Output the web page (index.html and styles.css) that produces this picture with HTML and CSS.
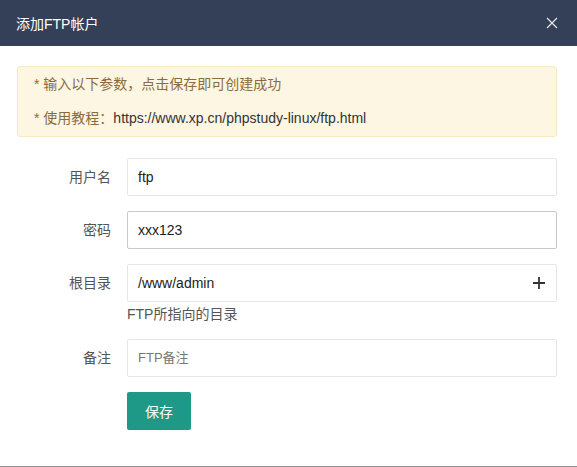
FILE: index.html
```html
<!DOCTYPE html>
<html lang="zh-CN">
<head>
<meta charset="utf-8">
<link rel="stylesheet" href="styles.css">
</head>
<body>
<div class="dialog">
  <div class="header">
    <span class="title">添加FTP帐户</span>
    <svg class="close" width="12" height="12" viewBox="0 0 12 12"><path d="M1 1L11 11M11 1L1 11" stroke="#e6e8ee" stroke-width="1.2" fill="none"/></svg>
  </div>
  <div class="content">
    <div class="alert">
      <p>* 输入以下参数，点击保存即可创建成功</p>
      <p>* 使用教程：<span class="link">https://www.xp.cn/phpstudy-linux/ftp.html</span></p>
    </div>
    <div class="form">
      <div class="row">
        <label class="label">用户名</label>
        <div class="field"><div class="input">ftp</div></div>
      </div>
      <div class="row">
        <label class="label">密码</label>
        <div class="field"><div class="input focus">xxx123</div></div>
      </div>
      <div class="row">
        <label class="label">根目录</label>
        <div class="field">
          <div class="input with-icon">/www/admin
            <svg class="plus" width="12" height="12" viewBox="0 0 12 12"><path d="M6 0V12M0 6H12" stroke="#333" stroke-width="1.8" fill="none"/></svg>
          </div>
          <div class="help">FTP所指向的目录</div>
        </div>
      </div>
      <div class="row">
        <label class="label">备注</label>
        <div class="field"><div class="input placeholder">FTP备注</div></div>
      </div>
      <div class="row">
        <div class="label"></div>
        <div class="field"><button class="btn">保存</button></div>
      </div>
    </div>
  </div>
</div>
</body>
</html>
```

FILE: styles.css
```css
html, body {
  margin: 0;
  padding: 0;
  background: #fff;
}
body {
  font-family: "Liberation Sans", "Noto Sans CJK SC", sans-serif;
  font-size: 14px;
  color: #333;
}
.dialog {
  width: 577px;
  height: 466px;
  border-bottom: 1px solid #8f8f8f;
  box-sizing: content-box;
}
.header {
  height: 46px;
  background: #344058;
  display: flex;
  align-items: center;
  justify-content: space-between;
  padding: 0 19px 0 16px;
}
.title {
  color: #fff;
  font-size: 14px;
}
.close {
  display: block;
}
.content {
  padding: 20px 20px 0 17px;
}
.alert {
  background: #fdf6e2;
  border: 1px solid #f7e9c3;
  border-radius: 3px;
  height: 69px;
  padding: 0 16px;
  display: flex;
  flex-direction: column;
  justify-content: center;
  gap: 15px;
  color: #8b6b3a;
  font-size: 14px;
}
.alert p {
  margin: 0;
  line-height: 19px;
}
.link {
  color: #333;
}
.form {
  margin-top: 21px;
  display: flex;
  flex-direction: column;
  gap: 15px;
}
.row {
  display: flex;
  align-items: flex-start;
}
.label {
  width: 94px;
  flex: none;
  text-align: right;
  line-height: 38px;
  color: #555;
  padding-right: 16px;
}
.field {
  flex: 1;
}
.input {
  height: 38px;
  box-sizing: border-box;
  border: 1px solid #e6e6e6;
  border-radius: 2px;
  padding: 0 10px;
  line-height: 36px;
  color: #222;
  display: flex;
  align-items: center;
  justify-content: space-between;
}
.input.focus {
  border-color: #c9c9c9;
}
.input.placeholder {
  color: #777;
  font-size: 13px;
}
.plus {
  display: block;
  margin-right: 1px;
}
.help {
  margin-top: 2px;
  line-height: 20px;
  color: #555;
}
.btn {
  width: 64px;
  height: 38px;
  border: none;
  border-radius: 2px;
  background: #1f9987;
  color: #fff;
  font-family: inherit;
  font-size: 14px;
  padding: 0;
  margin-top: 0;
}
```
